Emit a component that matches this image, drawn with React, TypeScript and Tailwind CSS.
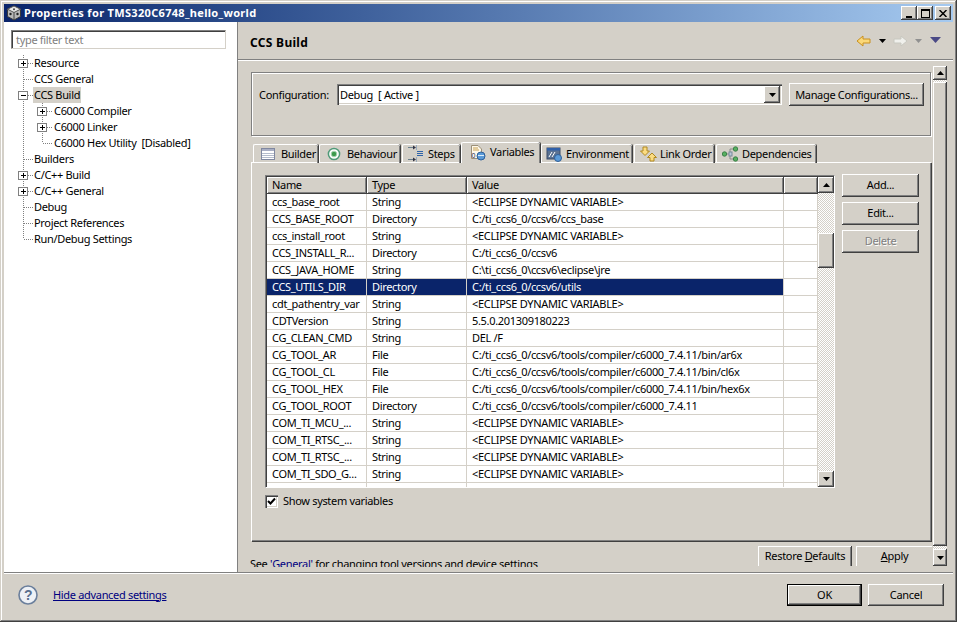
import React from "react";

const raised = "bg-[#d4d0c8] shadow-[inset_-1px_-1px_0_#404040,inset_1px_1px_0_#ffffff,inset_-2px_-2px_0_#808080]";
const font = "font-['Noto_Sans','Liberation_Sans',sans-serif]";
const track = "[background:repeating-conic-gradient(#d4d0c8_0_25%,#ffffff_0_50%)_0_0/2px_2px]";

const E = "<ECLIPSE DYNAMIC VARIABLE>";
const C = "C:/ti_ccs6_0/ccsv6";
const T = "C:/ti_ccs6_0/ccsv6/tools/compiler/c6000_7.4.11";
const rows: [string, string, string][] = [
  ["ccs_base_root", "String", E],
  ["CCS_BASE_ROOT", "Directory", C + "/ccs_base"],
  ["ccs_install_root", "String", E],
  ["CCS_INSTALL_R...", "Directory", C],
  ["CCS_JAVA_HOME", "String", "C:\\ti_ccs6_0\\ccsv6\\eclipse\\jre"],
  ["CCS_UTILS_DIR", "Directory", C + "/utils"],
  ["cdt_pathentry_var", "String", E],
  ["CDTVersion", "String", "5.5.0.201309180223"],
  ["CG_CLEAN_CMD", "String", "DEL /F"],
  ["CG_TOOL_AR", "File", T + "/bin/ar6x"],
  ["CG_TOOL_CL", "File", T + "/bin/cl6x"],
  ["CG_TOOL_HEX", "File", T + "/bin/hex6x"],
  ["CG_TOOL_ROOT", "Directory", T],
  ["COM_TI_MCU_...", "String", E],
  ["COM_TI_RTSC_...", "String", E],
  ["COM_TI_RTSC_...", "String", E],
  ["COM_TI_SDO_G...", "String", E],
];

function Arrow({ up, color = "#000" }: { up?: boolean; color?: string }) {
  return (
    <svg width="7" height="4" viewBox="0 0 7 4" className="block">
      <path d={up ? "M3.5 0L7 4H0Z" : "M0 0H7L3.5 4Z"} fill={color} />
    </svg>
  );
}

function ScrollBtn({ up, h = "h-4" }: { up?: boolean; h?: string }) {
  return <div className={`${raised} ${h} w-full shrink-0 flex items-center justify-center`}><Arrow up={up} /></div>;
}

type TreeProps = { label: string; level?: number; expander?: "+" | "-"; last?: boolean; selected?: boolean };

function TreeRow({ label, level = 0, expander, last, selected }: TreeProps) {
  const w = level === 0 ? 29 : 49;
  const x = level === 0 ? 19 : 38;
  const dots = "#808080";
  return (
    <div className="h-4 flex items-center">
      <svg width={w} height="16" viewBox={`0 0 ${w} 16`} className="shrink-0">
        <path d={last && level === 0 ? "M19.5 0V8" : "M19.5 0V16"} stroke={dots} strokeDasharray="1 1" fill="none" />
        {level === 1 && <path d={last ? "M38.5 0V8" : "M38.5 0V16"} stroke={dots} strokeDasharray="1 1" fill="none" />}
        <path d={`M${x + 1} 8.5H${w}`} stroke={dots} strokeDasharray="1 1" fill="none" />
        {expander && (
          <g>
            <rect x={x - 4.5} y="4.5" width="9" height="8" fill="#fff" stroke="#808080" />
            <path d={`M${x - 2} 8.5H${x + 3}`} stroke="#000" />
            {expander === "+" && <path d={`M${x + 0.5} 6V11`} stroke="#000" />}
          </g>
        )}
      </svg>
      <span className={`h-4 px-[1px] leading-4 whitespace-pre ${selected ? "bg-[#d4d0c8]" : ""}`}>{label}</span>
    </div>
  );
}

function BuilderIcon() {
  return (
    <svg width="16" height="16" viewBox="0 0 16 16"><rect x="0.5" y="2.5" width="13" height="11" fill="#fff" stroke="#8088a0" /><rect x="1" y="3" width="12" height="2" fill="#a8aec4" /><path d="M1 7.5H13M1 9.5H13M1 11.5H13" stroke="#b4bccc" /></svg>
  );
}
function BehaviourIcon() {
  return (
    <svg width="16" height="16" viewBox="0 0 16 16"><circle cx="7" cy="8" r="5.6" fill="#fff" stroke="#4f9a78" strokeWidth="1.5" /><circle cx="7" cy="8" r="2.8" fill="#3c9a4c" stroke="#a8d4b4" /></svg>
  );
}
function StepsIcon() {
  return (
    <svg width="18" height="18" viewBox="0 0 18 18" fill="none"><path d="M0 2.5H7M0 14.5H7" stroke="#6a7f8c" /><path d="M5 .5L8 2.5L5 4.5ZM5 12.5L8 14.5L5 16.5Z" fill="#334" /><path d="M8.5 0V5M8.5 12V17" stroke="#9ab" /><path d="M9 6.5H15M9 8.5H15M9 10.5H15" stroke="#2f63a8" /></svg>
  );
}
function VariablesIcon() {
  return (
    <svg width="16" height="17" viewBox="0 0 16 17"><path d="M1.5 1.5H8L11.5 5V14.5H1.5Z" fill="#fdf8ea" stroke="#9c9078" /><path d="M3 4H8M3 6H9" stroke="#c8a050" /><text x="1.5" y="14" fontSize="7" fill="#225" fontFamily="Liberation Sans">0</text><circle cx="11" cy="12" r="4" fill="#5a9ad8" stroke="#2e5f98" /><path d="M8 11.5H14" stroke="#dcecfa" /></svg>
  );
}
function EnvironmentIcon() {
  return (
    <svg width="16" height="16" viewBox="0 0 16 16"><rect x="1" y="2" width="13" height="11" fill="#5b7292" stroke="#3b4a66" /><rect x="1" y="2" width="13" height="2.5" fill="#2f5fa8" /><path d="M3 11L6 6M6 11L9 6" stroke="#fff" /><circle cx="12" cy="12" r="3.5" fill="#5a9ad8" stroke="#2e5f98" /></svg>
  );
}
function LinkOrderIcon() {
  return (
    <svg width="17" height="16" viewBox="0 0 17 16"><path d="M3 1H7V5H9.5L5 9.5L.5 5H3Z" fill="#fbdc82" stroke="#b08820" /><path d="M12 7L16.5 11.5H14V15H10V11.5H7.5Z" fill="#fbdc82" stroke="#b08820" /></svg>
  );
}
function DependenciesIcon() {
  return (
    <svg width="17" height="16" viewBox="0 0 17 16" fill="none"><path d="M4 8H8M8 3V13M8 3H12M8 13H12" stroke="#8a8a8a" /><rect x="7" y="6" width="3" height="4" fill="#b8c8d8" stroke="#7a8a9a" /><circle cx="2.5" cy="8" r="2.2" fill="#58b060" stroke="#3a8048" /><circle cx="13.5" cy="3" r="2.2" fill="#58b060" stroke="#3a8048" /><circle cx="13.5" cy="13" r="2.2" fill="#58b060" stroke="#3a8048" /></svg>
  );
}

function Tab({ label, w, icon, active }: { label: string; w: string; icon: React.ReactNode; active?: boolean }) {
  return (
    <div className={`${w} shrink-0 flex items-center rounded-t-[2px] border-t border-l border-white shadow-[inset_-1px_0_0_#808080,1px_0_0_#404040] ${active ? "h-[21px] relative z-10 bg-[#d4d0c8] pb-[2px]" : "h-[19px]"}`}>
      <span className="w-[20px] shrink-0 flex">{icon}</span>
      <span className="whitespace-pre">{label}</span>
    </div>
  );
}

function Btn({ children, w, h = "h-[23px]", pb = "pb-[2px]", disabled }: { children: React.ReactNode; w: string; h?: string; pb?: string; disabled?: boolean }) {
  return (
    <div className={`${raised} ${w} ${h} ${pb} shrink-0 flex items-center justify-center whitespace-pre ${disabled ? "text-[#808080] [text-shadow:1px_1px_0_#fff]" : ""}`}>{children}</div>
  );
}

function HeaderCell({ w, label }: { w: string; label: string }) {
  return <div className={`${raised} ${w} h-full shrink-0 pl-[5px] leading-[16px]`}>{label}</div>;
}

function Cell({ w, children }: { w: string; children?: React.ReactNode }) {
  return <div className={`${w} shrink-0 pl-[5px] border-r border-[#d4d0c8] overflow-hidden whitespace-pre h-full`}>{children}</div>;
}

export default function App() {
  return (
    <div className={`${font} w-[957px] h-[622px] text-[11px] leading-[16px] tracking-[-0.32px] text-black bg-[#d4d0c8] p-1 flex flex-col overflow-hidden shadow-[inset_-1px_-1px_0_#404040,inset_1px_1px_0_#d4d0c8,inset_-2px_-2px_0_#808080,inset_2px_2px_0_#ffffff]`}>
      {/* Title bar */}
      <div className="h-[18px] shrink-0 flex items-center bg-gradient-to-r from-[#0a246a] to-[#a6caf0]">
        <svg width="16" height="16" viewBox="0 0 16 16" className="ml-[2px] shrink-0">
          <path d="M8 1L14.5 4.2V11.5L8 15L1.5 11.5V4.2Z" fill="#b8b8b8" stroke="#3a3a3a" />
          <path d="M1.5 4.2L8 1L14.5 4.2L8 7.5Z" fill="#e8e8e8" stroke="#555" />
          <path d="M8 7.5V15" stroke="#444" fill="none" />
          <circle cx="4.5" cy="9" r="1.2" fill="#222" /><circle cx="11.5" cy="9" r="1.2" fill="#222" /><circle cx="8" cy="4.2" r="1" fill="#444" />
        </svg>
        <span className="ml-[2px] font-bold text-white whitespace-pre tracking-[0.32px]">Properties for TMS320C6748_hello_world</span>
        <div className="ml-auto mr-[2px] flex">
          <div className={`${raised} w-4 h-[14px] flex items-end justify-center pb-[2px]`}><div className="w-[6px] h-[2px] bg-black" /></div>
          <div className={`${raised} w-4 h-[14px] flex items-center justify-center`}><div className="w-[9px] h-[9px] border border-black border-t-2" /></div>
          <div className={`${raised} w-4 h-[14px] ml-[2px] flex items-center justify-center`}>
            <svg width="8" height="7" viewBox="0 0 8 7"><path d="M0.5 0L7.5 7M7.5 0L0.5 7" stroke="#000" strokeWidth="1.5" /></svg>
          </div>
        </div>
      </div>

      {/* Main */}
      <div className="h-[551px] shrink-0 flex border-b border-[#808080] shadow-[0_1px_0_#fff]">
        {/* Left */}
        <div className="w-[234px] shrink-0 bg-white pt-2 border-r border-[#808080]">
          <div className="ml-[7px] w-[215px] h-[19px] bg-white pl-[4px] leading-[17px] text-[#808080] border border-[#808080] border-r-[#d4d0c8] border-b-[#d4d0c8] shadow-[inset_1px_1px_0_#404040]">type filter text</div>
          <div className="mt-[6px]">
            <TreeRow label="Resource" expander="+" />
            <TreeRow label="CCS General" />
            <TreeRow label="CCS Build" expander="-" selected />
            <TreeRow label="C6000 Compiler" level={1} expander="+" />
            <TreeRow label="C6000 Linker" level={1} expander="+" />
            <TreeRow label="C6000 Hex Utility  [Disabled]" level={1} last />
            <TreeRow label="Builders" />
            <TreeRow label="C/C++ Build" expander="+" />
            <TreeRow label="C/C++ General" expander="+" />
            <TreeRow label="Debug" />
            <TreeRow label="Project References" />
            <TreeRow label="Run/Debug Settings" last />
          </div>
        </div>

        {/* Right */}
        <div className="flex-1 min-w-0 flex flex-col">
          <div className="h-[38px] shrink-0 flex items-center pl-3 pr-3 pt-[4px] border-b border-[#808080] shadow-[0_1px_0_#fff]">
            <span className="font-bold text-[12px] tracking-[0.3px]">CCS Build</span>
            <div className="ml-auto flex items-center -mt-[3px]">
              <svg width="16" height="12" viewBox="0 0 16 12"><path d="M1 6L7 1V4H14V8H7V11Z" fill="#fbd878" stroke="#c89020" /></svg>
              <div className="ml-[7px]"><Arrow /></div>
              <svg width="16" height="12" viewBox="0 0 16 12" className="ml-[6px]"><path d="M15 6L9 1V4H2V8H9V11Z" fill="#f0f0ec" stroke="#c8c8c0" /></svg>
              <div className="ml-[7px]"><Arrow color="#909090" /></div>
              <div className="ml-[8px] -mt-[2px]"><svg width="11" height="6" viewBox="0 0 11 6" className="block"><path d="M0 0H11L5.5 6Z" fill="#4b4a86" /></svg></div>
            </div>
          </div>

          <div className="flex-1 min-h-0 flex">
            {/* Scrolled content */}
            <div className="ml-3 w-[682px] h-[507px] shrink-0 overflow-hidden flex flex-col pt-3">
              {/* Group */}
              <div className="ml-[1px] h-[64px] shrink-0 w-[680px] border border-[#808080] shadow-[inset_1px_1px_0_#fff,1px_1px_0_#fff] flex items-start pt-[11px] pl-[7px]">
                <span className="w-[78px] shrink-0 leading-[22px] whitespace-pre">Configuration:</span>
                <div className="w-[445px] h-[21px] bg-white flex items-center shrink-0 shadow-[inset_1px_1px_0_#808080,inset_2px_2px_0_#404040,inset_-1px_-1px_0_#fff,inset_-2px_-2px_0_#d4d0c8]">
                  <span className="pl-[3px] whitespace-pre">Debug  [ Active ]</span>
                  <div className={`${raised} ml-auto mr-[2px] w-4 h-[17px] flex items-center justify-center`}><Arrow /></div>
                </div>
                <div className="ml-[7px] -mt-[1px]"><Btn w="w-[135px]" pb="pb-0">Manage Configurations...</Btn></div>
              </div>

              {/* Tabs */}
              <div className="mt-[6px] h-[21px] shrink-0 flex items-end pl-[3px] -mb-[1px] relative">
                <Tab label="Builder" w="w-[65px] mr-[1px] pl-[7px]" icon={<BuilderIcon />} />
                <Tab label="Behaviour" w="w-[81px] mr-[2px] pl-[7px]" icon={<BehaviourIcon />} />
                <Tab label="Steps" w="w-[58px] mr-[1px] pl-[5px]" icon={<StepsIcon />} />
                <Tab label="Variables" w="w-[79px] mr-[1px] pl-[8px]" icon={<VariablesIcon />} active />
                <Tab label="Environment" w="w-[91px] mr-[2px] pl-[4px]" icon={<EnvironmentIcon />} />
                <Tab label="Link Order" w="w-[80px] mr-[2px] pl-[5px]" icon={<LinkOrderIcon />} />
                <Tab label="Dependencies" w="w-[100px] pl-[5px]" icon={<DependenciesIcon />} />
              </div>

              {/* Tab panel */}
              <div className="h-[379px] shrink-0 ml-[1px] w-[680px] border-t border-l border-white shadow-[inset_-1px_-1px_0_#808080,1px_1px_0_#404040] pt-[12px] pl-[13px] flex flex-col">
                <div className="flex items-start">
                  <div className="w-[570px] h-[313px] shrink-0 flex border-l border-t border-[#808080] border-r-[1px] border-r-white border-b-[1px] border-b-white shadow-[inset_1px_1px_0_#404040] bg-white">
                    <div className="flex-1 min-w-0 flex flex-col overflow-hidden pl-[1px] pt-[1px]">
                      <div className="h-[17px] shrink-0 flex">
                        <HeaderCell w="w-[100px]" label="Name" />
                        <HeaderCell w="w-[100px]" label="Type" />
                        <HeaderCell w="w-[317px]" label="Value" />
                        <HeaderCell w="w-[34px]" label="" />
                      </div>
                      {rows.map((r, i) => (
                        <div key={i} className="h-[17px] shrink-0 flex border-b border-[#d4d0c8] leading-[15px]">
                          <div className={`flex ${i === 5 ? "bg-[#0a246a] text-white" : ""}`}>
                            <Cell w="w-[100px]">{r[0]}</Cell>
                            <Cell w="w-[100px]">{r[1]}</Cell>
                            <Cell w="w-[317px]">{r[2]}</Cell>
                          </div>
                          <Cell w="w-[34px]" />
                        </div>
                      ))}
                      <div className="h-[17px] shrink-0 flex border-b border-[#d4d0c8]">
                        <Cell w="w-[100px]" /><Cell w="w-[100px]" /><Cell w="w-[317px]" /><Cell w="w-[34px]" />
                      </div>
                    </div>
                    <div className="w-[16px] shrink-0 flex flex-col pt-[1px]">
                      <ScrollBtn up />
                      <div className={`${track} h-[40px] shrink-0`} />
                      <div className={`${raised} h-[35px] shrink-0`} />
                      <div className={`${track} flex-1`} />
                      <ScrollBtn />
                    </div>
                  </div>
                  <div className="ml-[7px] -mt-[1px] flex flex-col gap-[5px]">
                    <Btn w="w-[77px]">Add...</Btn>
                    <Btn w="w-[77px]">Edit...</Btn>
                    <Btn w="w-[77px]" disabled>Delete</Btn>
                  </div>
                </div>
                <div className="mt-[5px] flex items-center">
                  <div className="w-[13px] h-[13px] bg-white shadow-[inset_1px_1px_0_#808080,inset_2px_2px_0_#404040,inset_-1px_-1px_0_#fff,inset_-2px_-2px_0_#d4d0c8] flex items-center justify-center">
                    <svg width="9" height="9" viewBox="0 0 9 9"><path d="M1 4L3.5 6.5L8 1.5" stroke="#000" strokeWidth="2" fill="none" /></svg>
                  </div>
                  <span className="ml-[5px] whitespace-pre">Show system variables</span>
                </div>
              </div>

              {/* Bottom row, clipped by the scrolled pane as in the reference */}
              <div className="h-[21px] shrink-0 mt-[5px] flex">
                <div className="pt-[10px] leading-[16px] whitespace-pre">See <span className="text-[#000080]">'General'</span> for changing tool versions and device settings</div>
                <div className="ml-auto flex">
                  <div className="w-[93px] h-[20px] pb-[2px] border-l border-t border-white shadow-[inset_-1px_0_0_#808080,1px_0_0_#404040] flex items-center justify-center whitespace-pre">Restore <span className="underline">D</span>efaults</div>
                  <div className="ml-[5px] w-[76px] h-[20px] pb-[2px] border-l border-t border-white flex items-center justify-center whitespace-pre"><span className="underline">A</span>pply</div>
                </div>
              </div>
            </div>

            {/* Outer scrollbar */}
            <div className="ml-[1px] w-[14px] shrink-0 mt-[6px] h-[500px] flex flex-col">
              <ScrollBtn up h="h-[14px]" />
              <div className={`${track} h-[2px] shrink-0`} />
              <div className={`${raised} flex-1`} />
              <div className={`${track} h-[3px] shrink-0`} />
              <ScrollBtn h="h-[17px]" />
            </div>
          </div>
        </div>
      </div>

      {/* Footer */}
      <div className="flex-1 min-h-0 flex items-center pl-[14px] pr-[9px] pb-[2px]">
        <svg width="20" height="20" viewBox="0 0 20 20" className="shrink-0">
          <circle cx="10" cy="10" r="9" fill="#eef1f6" stroke="#6b7f9c" strokeWidth="1.6" />
          <text x="10" y="15" textAnchor="middle" fontSize="14" fontWeight="bold" fill="#5a6f8e" fontFamily="Liberation Sans">?</text>
        </svg>
        <span className="ml-[15px] text-[#000080] underline whitespace-pre">Hide advanced settings</span>
        <div className="ml-auto flex items-center">
          <div className="border border-black"><div className={`${raised} w-[73px] h-[20px] flex items-center justify-center`}>OK</div></div>
          <div className="ml-[6px]"><Btn w="w-[76px]" h="h-[22px]" pb="pb-0">Cancel</Btn></div>
        </div>
      </div>
    </div>
  );
}
